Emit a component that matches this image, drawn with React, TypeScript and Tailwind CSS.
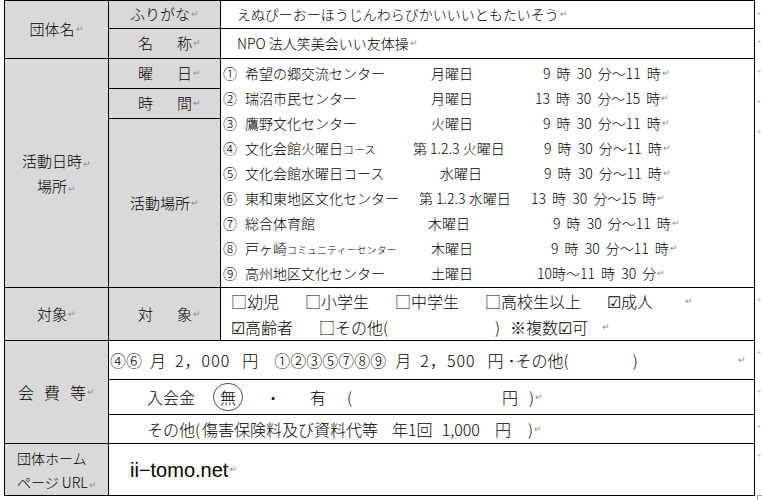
/* 団体紹介フォーム — Word の表をそのまま写した一枚もの。
   罫線は grid の gap-px を黒地に透かして引いている。 */

const cjk = "font-['Noto_Sans_CJK_JP',sans-serif]";
const gray = 'bg-[#d9d9d9]';

function Ret({ className = '' }: { className?: string }) {
  return (
    <span className={`ml-[1px] text-[9px] leading-none text-[#8c8c8c] font-['DejaVu_Sans',sans-serif] ${className}`}>
      ↵
    </span>
  );
}

function Label({ a, b }: { a: string; b: string }) {
  return (
    <div className={`${gray} flex items-center pl-[29px] text-[15px]`}>
      <span>{a}</span>
      <span className="ml-[24px]">{b}</span>
      <Ret />
    </div>
  );
}

function Venue({
  n,
  place,
  day,
  time,
  placeW,
  dayW,
}: {
  n: string;
  place: React.ReactNode;
  day: string;
  time: string;
  placeW: string;
  dayW: string;
}) {
  return (
    <div className="h-[25px] flex items-center whitespace-nowrap">
      <span className="w-[24px] pl-[2px]">{n}</span>
      <span className={placeW}>{place}</span>
      <span className={dayW}>{day}</span>
      <span className="[word-spacing:3px]">{time}</span>
      <Ret />
    </div>
  );
}

const rowMarks = [
  'h-[28px]',
  'h-[30px]',
  'h-[30px]',
  'h-[30px]',
  'h-[169px]',
  'h-[53px]',
  'h-[39px]',
  'h-[35px]',
  'h-[29px]',
  'h-[52px]',
];

export default function App() {
  return (
    <div className={`w-[762px] h-[500px] bg-white text-black font-light ${cjk} flex overflow-hidden`}>
      <div className="ml-[4px] h-fit grid grid-cols-[103px_111px_533px] grid-rows-[27px_29px_29px_29px_168px_52px_38px_34px_28px_51px] gap-px bg-black p-px">
        {/* 団体名 */}
        <div className={`${gray} col-start-1 row-start-1 row-span-2 flex items-center justify-center text-[15px]`}>
          団体名
          <Ret />
        </div>
        <div className={`${gray} col-start-2 row-start-1 flex items-center justify-center text-[15px]`}>
          ふりがな
          <Ret />
        </div>
        <div className="bg-white col-start-3 row-start-1 flex items-center pl-[16px] text-[14px]">
          えぬぴーおーほうじんわらびかいいいともたいそう
          <Ret />
        </div>
        <div className="col-start-2 row-start-2 grid">
          <Label a="名" b="称" />
        </div>
        <div className="bg-white col-start-3 row-start-2 flex items-center pl-[16px] text-[14px]">
          NPO 法人笑美会いい友体操
          <Ret />
        </div>

        {/* 活動日時・場所 */}
        <div className={`${gray} col-start-1 row-start-3 row-span-3 flex flex-col items-center justify-center text-[15px] leading-[25px]`}>
          <span>
            活動日時
            <Ret />
          </span>
          <span>
            場所
            <Ret />
          </span>
        </div>
        <div className="col-start-2 row-start-3 grid">
          <Label a="曜" b="日" />
        </div>
        <div className="col-start-2 row-start-4 grid">
          <Label a="時" b="間" />
        </div>
        <div className={`${gray} col-start-2 row-start-5 flex items-center justify-center text-[15px]`}>
          活動場所
          <Ret />
        </div>
        <div className="bg-white col-start-3 row-start-3 row-span-3 flex flex-col pt-[2px] text-[14px]">
          <Venue n="①" place="希望の郷交流センター" placeW="w-[186px]" day="月曜日" dayW="w-[112px]" time="9 時 30 分〜11 時" />
          <Venue n="②" place="瑞沼市民センター" placeW="w-[186px]" day="月曜日" dayW="w-[104px]" time="13 時 30 分〜15 時" />
          <Venue n="③" place="鷹野文化センター" placeW="w-[186px]" day="火曜日" dayW="w-[112px]" time="9 時 30 分〜11 時" />
          <Venue
            n="④"
            place={
              <>
                文化会館火曜日<span className="text-[11px]">コース</span>
              </>
            }
            placeW="w-[168px]"
            day="第 1.2.3 火曜日"
            dayW="w-[131px]"
            time="9 時 30 分〜11 時"
          />
          <Venue
            n="⑤"
            place="文化会館水曜日コース"
            placeW="w-[195px]"
            day="水曜日"
            dayW="w-[104px]"
            time="9 時 30 分〜11 時"
          />
          <Venue
            n="⑥"
            place="東和東地区文化センター"
            placeW="w-[174px]"
            day="第 1.2.3 水曜日"
            dayW="w-[112px]"
            time="13 時 30 分〜15 時"
          />
          <Venue n="⑦" place="総合体育館" placeW="w-[183px]" day="木曜日" dayW="w-[125px]" time="9 時 30 分〜11 時" />
          <Venue
            n="⑧"
            place={
              <>
                戸ヶ崎<span className="text-[10px]">コミュニティーセンター</span>
              </>
            }
            placeW="w-[186px]"
            day="木曜日"
            dayW="w-[120px]"
            time="9 時 30 分〜11 時"
          />
          <Venue n="⑨" place="高州地区文化センター" placeW="w-[186px]" day="土曜日" dayW="w-[106px]" time="10時〜11 時 30 分" />
        </div>

        {/* 対象 */}
        <div className={`${gray} col-start-1 row-start-6 flex items-center justify-center text-[15px]`}>
          対象
          <Ret />
        </div>
        <div className="col-start-2 row-start-6 grid">
          <Label a="対" b="象" />
        </div>
        <div className="bg-white col-start-3 row-start-6 flex flex-col justify-center pl-[10px] text-[16px]">
          <div className="h-[26px] flex items-center gap-[26px] whitespace-nowrap">
            <span>□幼児</span>
            <span>□小学生</span>
            <span>□中学生</span>
            <span>□高校生以上</span>
            <span>☑成人</span>
            <Ret className="ml-[6px]" />
          </div>
          <div className="h-[26px] flex items-center whitespace-nowrap">
            <span>☑高齢者</span>
            <span className="ml-[26px] w-[176px]">□その他(</span>
            <span>)</span>
            <span className="ml-[10px]">※複数☑可</span>
            <Ret className="ml-[14px]" />
          </div>
        </div>

        {/* 会費等 */}
        <div className={`${gray} col-start-1 row-start-7 row-span-3 flex items-center justify-center text-[16px]`}>
          <span>会</span>
          <span className="ml-[10px]">費</span>
          <span className="ml-[10px]">等</span>
          <Ret />
        </div>
        <div className="bg-white col-start-2 col-span-2 row-start-7 flex items-center pl-[1px] pr-[8px] text-[16px] whitespace-nowrap">
          <span>④⑥</span>
          <span className="ml-[8px]">月</span>
          <span className="ml-[9px] tracking-[1px]">2，000</span>
          <span className="ml-[12px]">円</span>
          <span className="ml-[16px]">①②③⑤⑦⑧⑨</span>
          <span className="ml-[9px]">月</span>
          <span className="ml-[9px] tracking-[1px]">2，500</span>
          <span className="ml-[12px]">円</span>
          <span className="ml-[4px]">･その他(</span>
          <span className="ml-[64px]">)</span>
          <Ret className="ml-auto" />
        </div>
        <div className="bg-white col-start-2 col-span-2 row-start-8 flex items-center pl-[38px] text-[16px] whitespace-nowrap">
          <span>入会金</span>
          <span className="ml-[18px] w-[30px] h-[28px] rounded-full border border-[#3b5078] flex items-center justify-center">
            無
          </span>
          <span className="ml-[22px]">・</span>
          <span className="ml-[29px]">有</span>
          <span className="ml-[21px]">(</span>
          <span className="ml-[150px]">円</span>
          <span className="ml-[11px]">)</span>
          <Ret />
        </div>
        <div className="bg-white col-start-2 col-span-2 row-start-9 flex items-center pl-[38px] text-[16px] whitespace-nowrap">
          <span>その他(</span>
          <span className="ml-[2px]">傷害保険料及び資料代等</span>
          <span className="ml-[14px]">年1回</span>
          <span className="ml-[9px]">1,000</span>
          <span className="ml-[15px]">円</span>
          <span className="ml-[17px]">)</span>
          <Ret />
        </div>

        {/* ホームページ */}
        <div className={`${gray} col-start-1 row-start-10 flex flex-col justify-center pl-[12px] text-[14px] leading-[24px]`}>
          <span>団体ホーム</span>
          <span>
            ページ URL
            <Ret />
          </span>
        </div>
        <div className="bg-white col-start-2 col-span-2 row-start-10 flex items-center pl-[21px] text-[20px] font-normal font-['Liberation_Sans',sans-serif]">
          ii−tomo.net
          <Ret />
        </div>
      </div>

      {/* 行末マーク */}
      <div className="w-[7px] flex flex-col pl-[2px]">
        {rowMarks.map((h, i) => (
          <div key={i} className={`${h} pt-[9px] text-[8px] leading-none text-[#a6a6a6]`}>
            +
          </div>
        ))}
        <div className="mt-[1px] w-[5px] h-[5px] border-l border-t border-[#a6a6a6]" />
      </div>
    </div>
  );
}
